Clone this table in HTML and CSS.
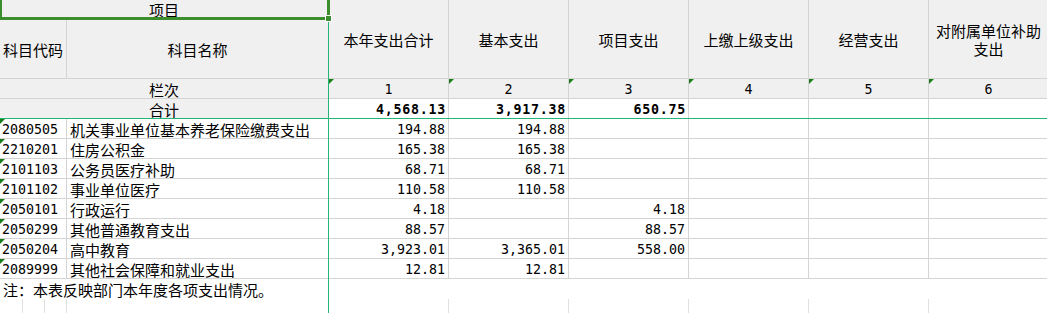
FILE: index.html
```html
<!DOCTYPE html>
<html lang="zh-CN">
<head>
<meta charset="utf-8">
<title>支出表</title>
<link rel="stylesheet" href="styles.css">
</head>
<body>
<div class="sheet">
  <div class="grid">
    <div class="c hd span-ab">项目</div>
    <div class="c hd tall">本年支出合计</div>
    <div class="c hd tall">基本支出</div>
    <div class="c hd tall">项目支出</div>
    <div class="c hd tall">上缴上级支出</div>
    <div class="c hd tall">经营支出</div>
    <div class="c hd tall">对附属单位补助支出</div>

    <div class="c hd span-a">科目代码</div>
    <div class="c hd">科目名称</div>

    <div class="c hd span-ab">栏次</div>
    <div class="c hd num mark">1</div>
    <div class="c hd num mark">2</div>
    <div class="c hd num mark">3</div>
    <div class="c hd num mark">4</div>
    <div class="c hd num mark">5</div>
    <div class="c hd num mark">6</div>

    <div class="c hd span-ab">合计</div>
    <div class="c num bold">4,568.13</div>
    <div class="c num bold">3,917.38</div>
    <div class="c num bold">650.75</div>
    <div class="c"></div>
    <div class="c"></div>
    <div class="c"></div>

    <div class="c code mark span-a">2080505</div>
    <div class="c name">机关事业单位基本养老保险缴费支出</div>
    <div class="c num">194.88</div>
    <div class="c num">194.88</div>
    <div class="c"></div><div class="c"></div><div class="c"></div><div class="c"></div>

    <div class="c code mark span-a">2210201</div>
    <div class="c name">住房公积金</div>
    <div class="c num">165.38</div>
    <div class="c num">165.38</div>
    <div class="c"></div><div class="c"></div><div class="c"></div><div class="c"></div>

    <div class="c code mark span-a">2101103</div>
    <div class="c name">公务员医疗补助</div>
    <div class="c num">68.71</div>
    <div class="c num">68.71</div>
    <div class="c"></div><div class="c"></div><div class="c"></div><div class="c"></div>

    <div class="c code mark span-a">2101102</div>
    <div class="c name">事业单位医疗</div>
    <div class="c num">110.58</div>
    <div class="c num">110.58</div>
    <div class="c"></div><div class="c"></div><div class="c"></div><div class="c"></div>

    <div class="c code mark span-a">2050101</div>
    <div class="c name">行政运行</div>
    <div class="c num">4.18</div>
    <div class="c"></div>
    <div class="c num">4.18</div>
    <div class="c"></div><div class="c"></div><div class="c"></div>

    <div class="c code mark span-a">2050299</div>
    <div class="c name">其他普通教育支出</div>
    <div class="c num">88.57</div>
    <div class="c"></div>
    <div class="c num">88.57</div>
    <div class="c"></div><div class="c"></div><div class="c"></div>

    <div class="c code mark span-a">2050204</div>
    <div class="c name">高中教育</div>
    <div class="c num">3,923.01</div>
    <div class="c num">3,365.01</div>
    <div class="c num">558.00</div>
    <div class="c"></div><div class="c"></div><div class="c"></div>

    <div class="c code mark span-a">2089999</div>
    <div class="c name">其他社会保障和就业支出</div>
    <div class="c num">12.81</div>
    <div class="c num">12.81</div>
    <div class="c"></div><div class="c"></div><div class="c"></div><div class="c"></div>

    <div class="c note">注：本表反映部门本年度各项支出情况。</div>

    <div class="c tail"></div><div class="c tail"></div><div class="c tail"></div><div class="c tail"></div>
    <div class="c tail"></div><div class="c tail"></div><div class="c tail"></div><div class="c tail"></div>
    <div class="c tail"></div><div class="c tail"></div>
  </div>
  <div class="freeze-v"></div>
  <div class="freeze-h"></div>
  <div class="selection"></div>
  <div class="handle"></div>
</div>
</body>
</html>
```
FILE: styles.css
```css
html, body {
  margin: 0;
  padding: 0;
  background: #ffffff;
  overflow: hidden;
}

body {
  font-family: "Noto Sans CJK SC", sans-serif;
  font-size: 15px;
  color: #000000;
}

.sheet {
  position: relative;
  width: 1047px;
  height: 313px;
  overflow: hidden;
}

.grid {
  display: grid;
  grid-template-columns: 23px 22px 22px 262px repeat(6, 120px);
  grid-template-rows: 19px 60px repeat(12, 20px);
  width: 1048px;
}

.c {
  box-sizing: border-box;
  position: relative;
  display: flex;
  align-items: center;
  border-right: 1px solid #d4d4d4;
  border-bottom: 1px solid #d4d4d4;
  white-space: nowrap;
  line-height: 18px;
  padding-top: 2px;
  overflow: hidden;
}

.hd {
  background: #f0f0f0;
  justify-content: center;
  text-align: center;
}

.span-ab {
  grid-column: span 4;
}

.span-a {
  grid-column: span 3;
}

.tall {
  grid-row: span 2;
  white-space: normal;
  padding-top: 1px;
}

.num {
  font-family: "DejaVu Sans Mono", monospace;
  font-size: 13.3px;
  justify-content: flex-end;
  padding-right: 3px;
}

.hd.num {
  justify-content: center;
  padding-right: 0;
}

.bold {
  font-weight: bold;
  letter-spacing: 0.75px;
  padding-right: 2px;
}

.code {
  font-family: "DejaVu Sans Mono", monospace;
  font-size: 13.3px;
  padding-left: 2px;
}

.name {
  padding-left: 3px;
}

.mark::before {
  content: "";
  position: absolute;
  left: 0;
  top: 0;
  width: 0;
  height: 0;
  border-top: 5px solid #1a7d1a;
  border-right: 5px solid transparent;
}

.note {
  grid-column: 1 / -1;
  border-right: none;
  border-bottom: none;
  padding-left: 3px;
}

.tail {
  border-bottom: none;
  border-right-color: #e0e0e0;
}

.freeze-v {
  position: absolute;
  left: 328px;
  top: 19px;
  bottom: 0;
  width: 1px;
  background: #22b574;
}

.freeze-h {
  position: absolute;
  left: 0;
  right: 0;
  top: 118px;
  height: 1px;
  background: #22b574;
}

.selection {
  position: absolute;
  left: -1px;
  top: -4px;
  width: 331px;
  height: 24px;
  box-sizing: border-box;
  border: 3px solid #3b8d2d;
}

.handle {
  position: absolute;
  left: 325px;
  top: 15px;
  width: 5px;
  height: 5px;
  border: 1px solid #ffffff;
  background: #3b8d2d;
}
```
